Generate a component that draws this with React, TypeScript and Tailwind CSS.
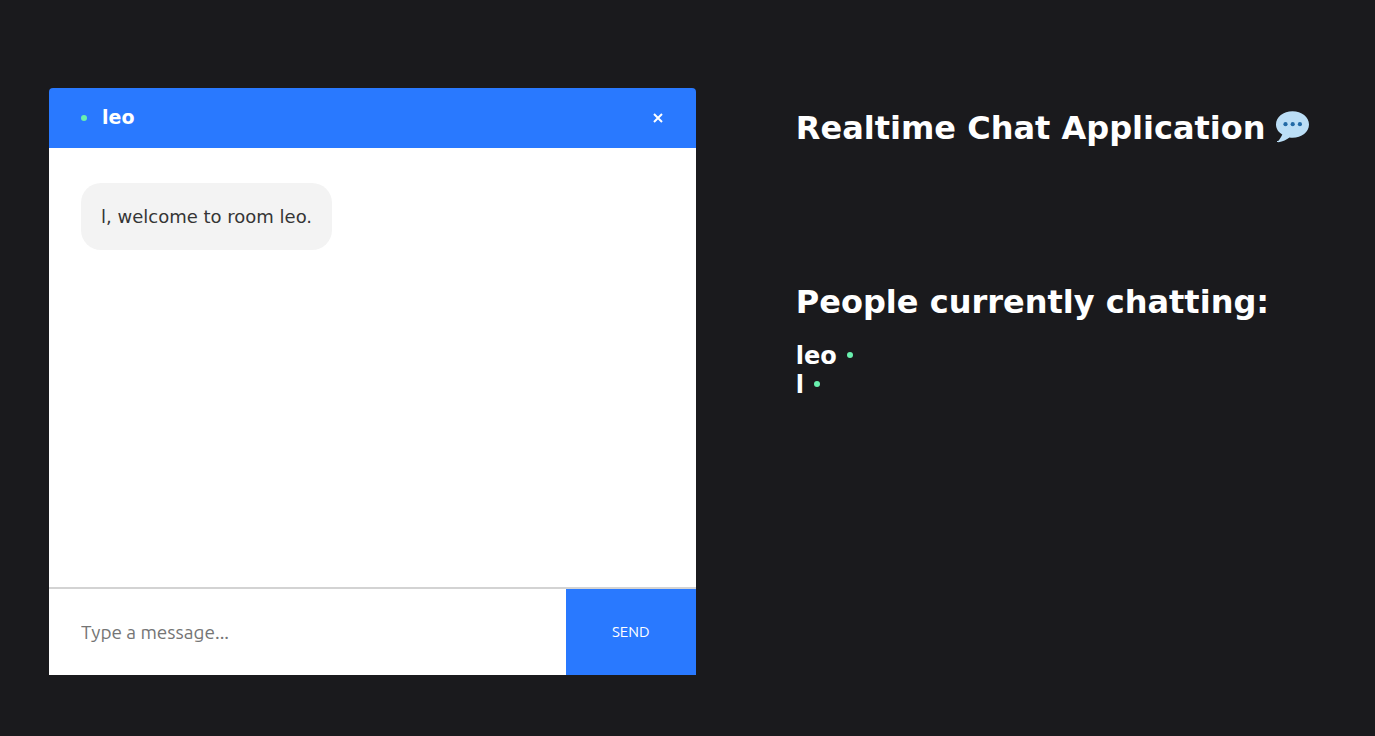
import { useState } from "react";
import type { FormEvent } from "react";

const people = ["leo", "l"];

function OnlineDot() {
  return <span className="block size-1.5 shrink-0 rounded-full bg-[#69f0ae]" aria-hidden="true" />;
}

function SpeechBalloon() {
  return (
    <svg className="h-8 w-[33px] shrink-0" viewBox="0 0 33 32" aria-hidden="true">
      <path
        d="M16.500 0.200C25.600 0.200 33 6 33 13.500S25.600 26.800 16.500 26.800c-1 0-2-.1-3-.2C10.800 28.800 6.700 30.600 2.600 31.200c-.8.1-1-.4-.6-.9 1.700-2 3.300-4.400 4.300-6.800C2.300 21.200 0 17.600 0 13.500 0 6 7.400 .2 16.500 .2Z"
        fill="#bbdef6"
      />
      <circle cx="9.500" cy="13.200" r="2.100" fill="#226aa6" />
      <circle cx="16.700" cy="13.200" r="2.100" fill="#226aa6" />
      <circle cx="23.900" cy="13.200" r="2.100" fill="#226aa6" />
    </svg>
  );
}

function ChatHeader({ room }: { room: string }) {
  return (
    <header className="flex h-15 items-center justify-between rounded-t bg-[#2979ff] px-8">
      <div className="flex items-center gap-[15px]">
        <OnlineDot />
        <h3 className="pb-0.5 text-[19px] leading-6 font-bold">{room}</h3>
      </div>
      <a href="/" aria-label="Leave room" className="flex h-6 w-3 items-center justify-center">
        <svg className="size-2.5" viewBox="0 0 10 10" aria-hidden="true">
          <path d="M1 1l8 8M9 1l-8 8" stroke="white" strokeWidth="2" />
        </svg>
      </a>
    </header>
  );
}

function Composer({ onSend }: { onSend: (text: string) => void }) {
  const [text, setText] = useState("");
  const submit = (event: FormEvent) => {
    event.preventDefault();
    if (!text.trim()) return;
    onSend(text.trim());
    setText("");
  };
  return (
    <form onSubmit={submit} className="flex border-t-2 border-[#d3d3d3] font-['Ubuntu','Noto_Sans',sans-serif]">
      <input
        type="text"
        aria-label="Message"
        placeholder="Type a message..."
        value={text}
        onChange={(event) => setText(event.target.value)}
        className="h-[86px] min-w-0 flex-1 bg-white px-8 text-[19px] text-[#353535] outline-none placeholder:text-[#757575]"
      />
      <button type="submit" className="w-[130px] bg-[#2979ff] text-[15px] text-white uppercase">
        Send
      </button>
    </form>
  );
}

export default function App() {
  const [messages, setMessages] = useState(["l, welcome to room leo."]);
  return (
    <div className="grid min-h-screen grid-cols-[55fr_45fr] items-start gap-[100px] bg-[#1a1a1d] pt-[88px] pr-[50px] pb-15 pl-[49px] font-['DejaVu_Sans',sans-serif] text-white">
      <main className="flex min-w-0 flex-col">
        <ChatHeader room="leo" />
        <div className="flex h-[439px] flex-col items-start gap-2 overflow-auto bg-white px-8 py-[35px]">
          {messages.map((message, index) => (
            <p key={index} className="rounded-[20px] bg-[#f3f3f3] px-5 py-5 text-[18px] leading-[27px] text-[#353535]">
              {message}
            </p>
          ))}
        </div>
        <Composer onSend={(text) => setMessages((list) => [...list, text])} />
      </main>
      <aside className="min-w-0 pt-[21px]">
        <h1 className="flex items-start gap-2.5 text-[32px] leading-[38px] font-bold whitespace-nowrap">
          Realtime Chat Application
          <span className="pt-0.5">
            <SpeechBalloon />
          </span>
        </h1>
        <h2 className="mt-34 text-[32px] leading-[38px] font-bold whitespace-nowrap">People currently chatting:</h2>
        <ul className="mt-[21px] text-2xl leading-[29px] font-bold">
          {people.map((name) => (
            <li key={name} className="flex items-center gap-2.5">
              {name}
              <span className="pb-1">
                <OnlineDot />
              </span>
            </li>
          ))}
        </ul>
      </aside>
    </div>
  );
}
